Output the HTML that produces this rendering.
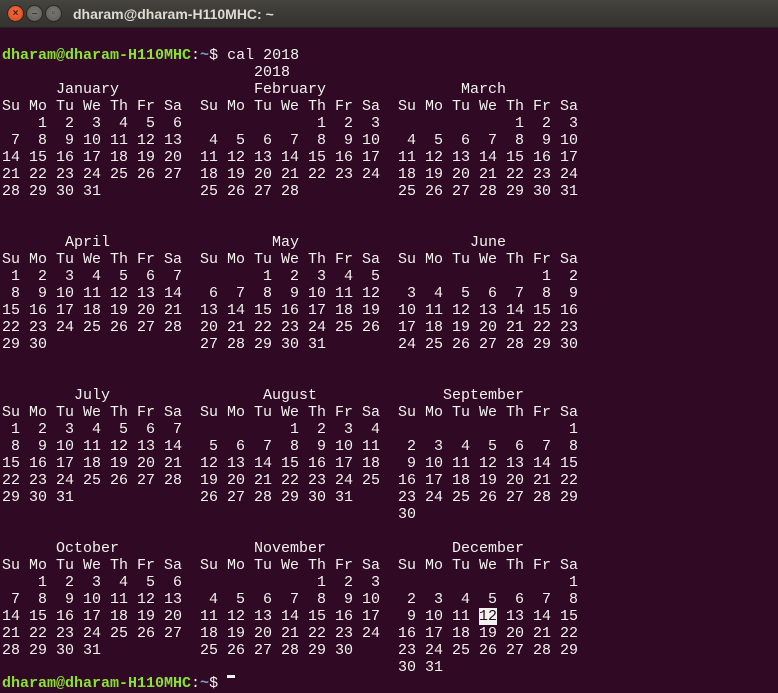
<!DOCTYPE html>
<html><head><meta charset="utf-8"><style>
html,body{margin:0;padding:0;width:778px;height:678px;overflow:hidden;background:#300a24;}
#tb{position:absolute;left:0;top:0;width:778px;height:28px;background:linear-gradient(#45443f,#3a3935 60%,#33322e);border-bottom:1px solid #26251f;box-sizing:border-box;}
.btn{position:absolute;top:5px;width:17px;height:17px;border-radius:50%;box-sizing:border-box;}
#c{left:7px;background:radial-gradient(circle at 50% 40%,#f36b3e,#d9471b);border:1px solid #2a2925;}
#m{left:26px;background:radial-gradient(circle at 50% 40%,#7a7873,#5c5b57);border:1px solid #2a2925;}
#x{left:45px;background:radial-gradient(circle at 50% 40%,#7a7873,#5c5b57);border:1px solid #2a2925;}
.btn span{position:absolute;left:0;top:0;width:15px;height:15px;text-align:center;font:bold 10px/15px "Liberation Sans",sans-serif;color:#3a2010;}
#m span,#x span{color:#3a3935}
#ttl{position:absolute;left:73px;top:5px;font:bold 14px/18px "Liberation Sans",sans-serif;color:#dfdbd2;}
pre{margin:0;font:15px/17px "Liberation Mono",monospace;color:#f2f2ee;}
#t{position:absolute;left:2px;top:47px;}
.q{display:block;height:153px;white-space:nowrap;}
.q pre{display:inline-block;width:198px;vertical-align:top;}
.g{color:#8ae234;font-weight:bold}.b{color:#729fcf;font-weight:bold}
.h{background:#f2f2ee;color:#300a24}
#cur{position:absolute;left:227px;top:675px;width:8px;height:3px;background:#f2f2ee;}
</style></head><body>
<div id="tb"><div class="btn" id="c"><span>×</span></div><div class="btn" id="m"><span>–</span></div><div class="btn" id="x"><span>▫</span></div><div id="ttl">dharam@dharam-H110MHC: ~</div></div>
<div id="t">
<pre><span class="g">dharam@dharam-H110MHC</span>:<span class="b">~</span>$ cal 2018
                            2018</pre>
<div class="q"><pre>      January
Su Mo Tu We Th Fr Sa
    1  2  3  4  5  6
 7  8  9 10 11 12 13
14 15 16 17 18 19 20
21 22 23 24 25 26 27
28 29 30 31</pre><pre>      February
Su Mo Tu We Th Fr Sa
             1  2  3
 4  5  6  7  8  9 10
11 12 13 14 15 16 17
18 19 20 21 22 23 24
25 26 27 28</pre><pre>       March
Su Mo Tu We Th Fr Sa
             1  2  3
 4  5  6  7  8  9 10
11 12 13 14 15 16 17
18 19 20 21 22 23 24
25 26 27 28 29 30 31</pre></div>
<div class="q"><pre>       April
Su Mo Tu We Th Fr Sa
 1  2  3  4  5  6  7
 8  9 10 11 12 13 14
15 16 17 18 19 20 21
22 23 24 25 26 27 28
29 30</pre><pre>        May
Su Mo Tu We Th Fr Sa
       1  2  3  4  5
 6  7  8  9 10 11 12
13 14 15 16 17 18 19
20 21 22 23 24 25 26
27 28 29 30 31</pre><pre>        June
Su Mo Tu We Th Fr Sa
                1  2
 3  4  5  6  7  8  9
10 11 12 13 14 15 16
17 18 19 20 21 22 23
24 25 26 27 28 29 30</pre></div>
<div class="q"><pre>        July
Su Mo Tu We Th Fr Sa
 1  2  3  4  5  6  7
 8  9 10 11 12 13 14
15 16 17 18 19 20 21
22 23 24 25 26 27 28
29 30 31</pre><pre>       August
Su Mo Tu We Th Fr Sa
          1  2  3  4
 5  6  7  8  9 10 11
12 13 14 15 16 17 18
19 20 21 22 23 24 25
26 27 28 29 30 31</pre><pre>     September
Su Mo Tu We Th Fr Sa
                   1
 2  3  4  5  6  7  8
 9 10 11 12 13 14 15
16 17 18 19 20 21 22
23 24 25 26 27 28 29
30</pre></div>
<div class="q"><pre>      October
Su Mo Tu We Th Fr Sa
    1  2  3  4  5  6
 7  8  9 10 11 12 13
14 15 16 17 18 19 20
21 22 23 24 25 26 27
28 29 30 31</pre><pre>      November
Su Mo Tu We Th Fr Sa
             1  2  3
 4  5  6  7  8  9 10
11 12 13 14 15 16 17
18 19 20 21 22 23 24
25 26 27 28 29 30</pre><pre>      December
Su Mo Tu We Th Fr Sa
                   1
 2  3  4  5  6  7  8
 9 10 11 <span class="h">12</span> 13 14 15
16 17 18 19 20 21 22
23 24 25 26 27 28 29
30 31</pre></div>
</div>
<pre style="position:absolute;left:2px;top:675px;"><span class="g">dharam@dharam-H110MHC</span>:<span class="b">~</span>$ </pre>
<div id="cur"></div>
</body></html>
